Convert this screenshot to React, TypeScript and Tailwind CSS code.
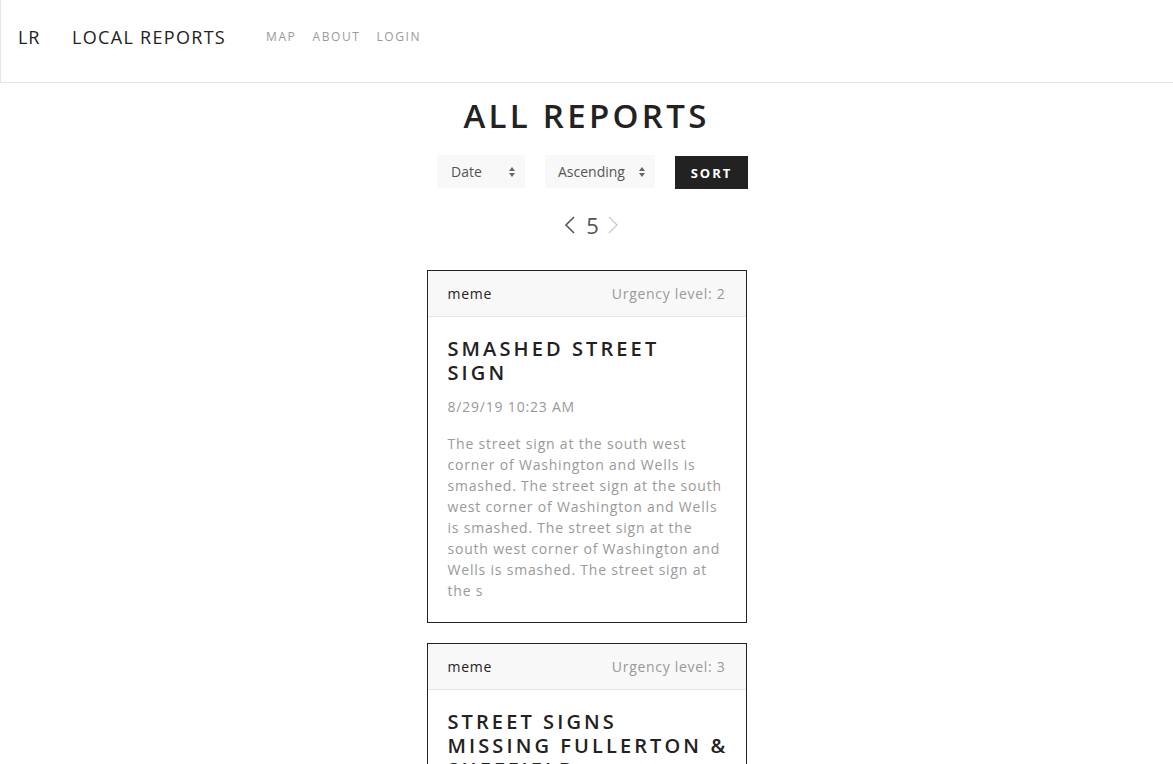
import React from "react";

const font = { fontFamily: "'Open Sans', Lato, sans-serif" };

function Arrows() {
  return (
    <svg width="6" height="12" viewBox="0 0 6 12" className="ml-auto">
      <polygon points="3,1 6,5 0,5" fill="#666" />
      <polygon points="3,11 6,7 0,7" fill="#666" />
    </svg>
  );
}

const reports = [
  {
    user: "meme",
    urgency: 2,
    title: ["SMASHED STREET", "SIGN"],
    date: "8/29/19 10:23 AM",
    text:
      "The street sign at the south west corner of Washington and Wells is smashed. The street sign at the south west corner of Washington and Wells is smashed. The street sign at the south west corner of Washington and Wells is smashed. The street sign at the s",
  },
  {
    user: "meme",
    urgency: 3,
    title: ["STREET SIGNS", "MISSING FULLERTON &", "SHEFFIELD"],
    date: "8/29/19 10:20 AM",
    text:
      "The street signs at the corner of Fullerton and Sheffield are missing. The street signs at the corner of Fullerton and Sheffield are missing.",
  },
];

export default function App() {
  return (
    <div className="min-h-screen bg-white text-[#222]" style={font}>
      <nav className="h-[83px] border-l border-b border-[#e5e5e5] flex items-start pt-[25px]">
        <div className="pl-[17px] text-[18px] leading-[24px] tracking-[0.8px] font-medium text-[#222]">LR</div>
        <div className="pl-[32px] text-[18px] leading-[24px] tracking-[1.3px] font-medium text-[#222]">LOCAL REPORTS</div>
        <div className="flex items-center gap-[16px] pl-[40px] pt-[3px] text-[12px] leading-[18px] tracking-[1.6px] text-[#999]">
          <span>MAP</span>
          <span>ABOUT</span>
          <span>LOGIN</span>
        </div>
      </nav>

      <main className="flex flex-col items-center">
        <h1 className="mt-[10px] text-[33px] leading-[46px] font-semibold tracking-[3.3px] text-[#222]">
          ALL REPORTS
        </h1>
        <div className="mt-[16px] pl-[12px] flex items-start gap-5">
          <div className="w-[88px] h-[33px] bg-[#f8f8f8] flex items-center pl-[14px] pr-[10px] text-[14px] text-[#555]">
            <span>Date</span>
            <Arrows />
          </div>
          <div className="w-[110px] h-[33px] bg-[#f8f8f8] flex items-center pl-[13px] pr-[10px] text-[14px] text-[#555]">
            <span>Ascending</span>
            <Arrows />
          </div>
          <div className="mt-px w-[73px] h-[33px] bg-[#222] text-white flex items-center justify-center pt-[3px] text-[13px] font-bold tracking-[2px]">
            SORT
          </div>
        </div>
        <div className="mt-[23px] pl-[10px] flex items-center gap-[10px] h-[26px]">
          <svg width="12" height="18" viewBox="0 0 12 18">
            <polyline points="10,1 2,9 10,17" fill="none" stroke="#555" strokeWidth="1.6" />
          </svg>
          <span className="text-[22px] leading-none text-[#555]">5</span>
          <svg width="12" height="18" viewBox="0 0 12 18" className="-ml-[2px]">
            <polyline points="2,1 10,9 2,17" fill="none" stroke="#ccc" strokeWidth="1.4" />
          </svg>
        </div>

        <div className="mt-[32px] flex flex-col gap-5 pb-10">
          {reports.map((r, i) => (
            <div key={i} className="w-[320px] border border-[#222]">
              <div className="h-[46px] bg-[#f8f8f8] border-b border-[#e5e5e5] px-5 flex items-center justify-between text-[14px] tracking-[0.7px]">
                <span className="text-[#222]">{r.user}</span>
                <span className="text-[#999]">Urgency level: {r.urgency}</span>
              </div>
              <div className="px-5 pt-[20px] pb-[21px]">
                <h3 className="text-[20px] leading-[24px] font-semibold tracking-[3.1px] text-[#222] whitespace-nowrap">
                  {r.title.map((line, j) => (
                    <React.Fragment key={j}>
                      {j > 0 && <br />}
                      {line}
                    </React.Fragment>
                  ))}
                </h3>
                <div className="mt-[11px] text-[14px] leading-[21px] tracking-[0.8px] text-[#999]">{r.date}</div>
                <p className="mt-[16px] text-[14px] leading-[21px] tracking-[0.8px] text-[#999]">{r.text}</p>
              </div>
            </div>
          ))}
        </div>
      </main>
    </div>
  );
}
